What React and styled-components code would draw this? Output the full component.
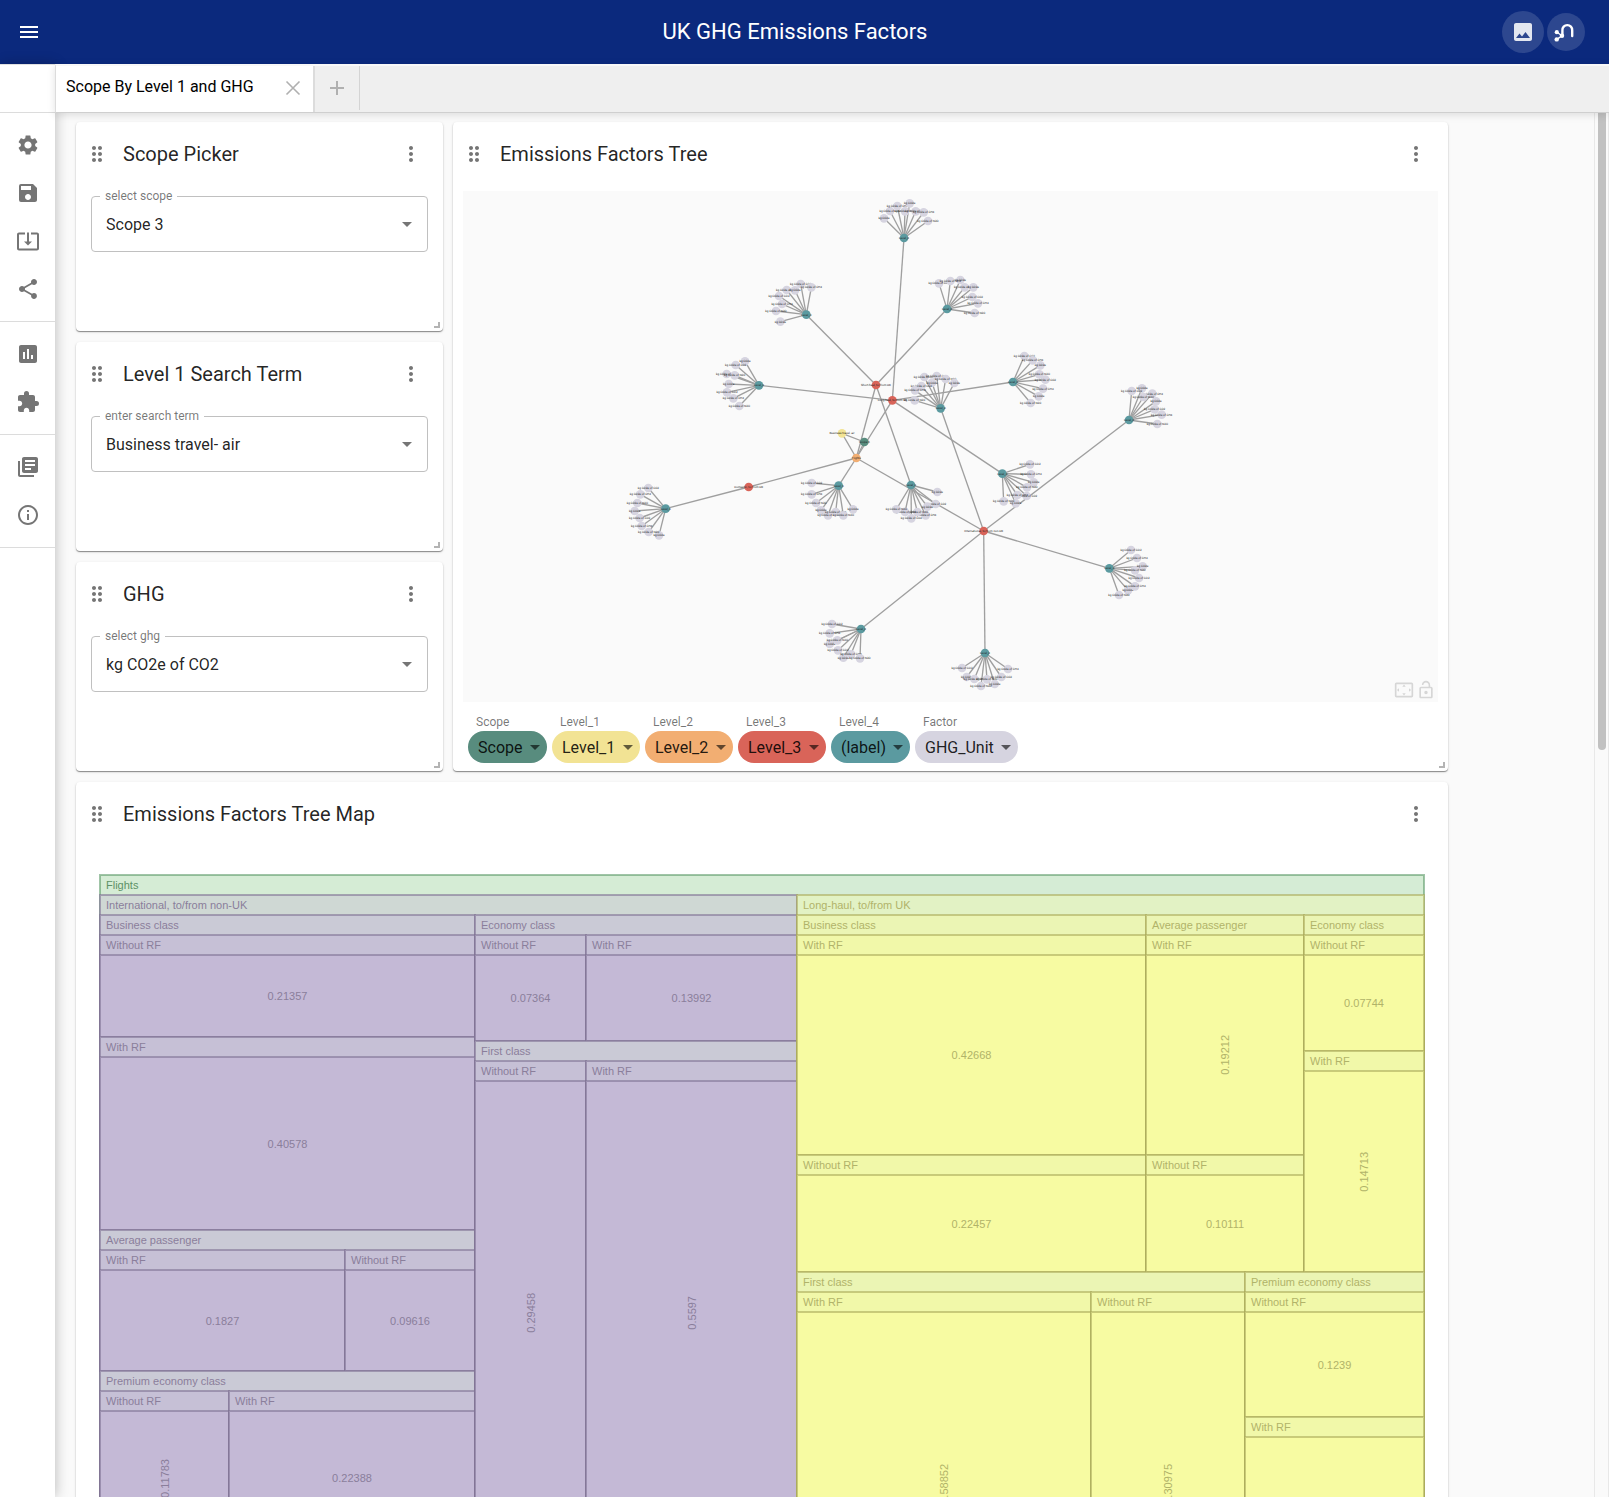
import React, { useId } from "react";
import styled, { createGlobalStyle } from "styled-components";
import {
  MdArrowDropDown,
  MdDragIndicator,
  MdExtension,
  MdImage,
  MdInfoOutline,
  MdInsertChart,
  MdLibraryBooks,
  MdLockOpen,
  MdMenu,
  MdMoreVert,
  MdSave,
  MdSettings,
  MdSettingsOverscan,
  MdShare,
  MdSystemUpdateAlt,
} from "react-icons/md";

const GlobalStyle = createGlobalStyle`
  *, *::before, *::after { box-sizing: border-box; }
  body {
    margin: 0;
    background: #fafafa;
    color: rgba(0, 0, 0, 0.87);
    font-family: Roboto, "Liberation Sans", sans-serif;
    font-size: 16px;
  }
  button, select { font: inherit; color: inherit; }
`;

/* ---------- shell ---------- */

const Shell = styled.div`
  display: flex;
  flex-direction: column;
  height: 100vh;
  overflow: hidden;
`;

const TopBar = styled.header`
  display: flex;
  align-items: center;
  flex: none;
  height: 64px;
  padding-right: 24px;
  background: #0b297d;
  color: #fff;
`;

const MenuSlot = styled.div`
  width: 88px;
  padding-left: 17px;
`;

const IconButton = styled.button`
  display: flex;
  align-items: center;
  justify-content: center;
  flex: none;
  width: ${(p) => p.$size || 24}px;
  height: ${(p) => p.$size || 24}px;
  padding: 0;
  border: 0;
  border-radius: 50%;
  background: ${(p) => p.$fill || "transparent"};
  color: ${(p) => p.$color || "#757575"};
  cursor: pointer;
`;

const AppTitle = styled.h1`
  flex: 1;
  margin: 0;
  text-align: center;
  font-size: 22px;
  font-weight: 400;
  line-height: 32px;
`;

const TopActions = styled.div`
  display: flex;
  align-items: center;
  gap: 3px;
`;

const Body = styled.div`
  display: flex;
  flex: 1;
  min-height: 0;
`;

const Sidebar = styled.nav`
  position: relative;
  z-index: 2;
  flex: none;
  width: 55px;
  background: #fff;
  box-shadow: 1px 0 12px rgba(0, 0, 0, 0.24);
`;

const SidebarTop = styled.div`
  height: 49px;
  border-top: 1px solid #e0e0e0;
  border-bottom: 1px solid #dcdcdc;
`;

const SidebarGroup = styled.div`
  display: flex;
  flex-direction: column;
  align-items: center;
  padding: 8px 0;
  border-bottom: 1px solid #dcdcdc;
`;

const Workspace = styled.div`
  display: flex;
  flex-direction: column;
  flex: 1;
  min-width: 0;
`;

const TabBar = styled.div`
  position: relative;
  z-index: 3;
  display: flex;
  flex: none;
  height: 49px;
  border-top: 2px solid #f8f8f8;
  border-left: 1px solid #dcdcdc;
  border-bottom: 1px solid #cfcfcf;
  background: #efefef;
  box-shadow: 0 2px 8px rgba(0, 0, 0, 0.12);
`;

const Tab = styled.div`
  display: flex;
  align-items: center;
  justify-content: space-between;
  width: 259px;
  padding: 0 10px 2px;
  border-right: 2px solid #dcdcdc;
  background: #fff;
  color: #000;
`;

const TabName = styled.a`
  padding-bottom: 2px;
  color: inherit;
  line-height: 24px;
  text-decoration: none;
`;

const AddTab = styled.div`
  display: flex;
  align-items: center;
  justify-content: center;
  width: 45px;
  height: 44px;
  border-right: 1px solid #d4d4d4;
`;

const Viewport = styled.div`
  display: flex;
  flex: 1;
  min-height: 0;
`;

const Canvas = styled.main`
  flex: 1;
  min-width: 0;
  padding: 9px 146px 9px 21px;
  overflow-y: auto;
  scrollbar-width: none;
`;

const ScrollTrack = styled.div`
  flex: none;
  width: 15px;
  padding: 0 3px;
  border: solid #e8e8e8;
  border-width: 0 1px;
  background: #fafafa;
`;

const ScrollThumb = styled.div`
  width: 8px;
  height: 46%;
  border-radius: 0 0 4px 4px;
  background: #c1c1c1;
`;

/* ---------- cards ---------- */

const Board = styled.div`
  display: grid;
  grid-template-columns: minmax(0, 367fr) minmax(0, 995fr);
  gap: 11px 10px;
`;

const Stack = styled.div`
  display: grid;
  grid-auto-rows: 209px;
  gap: 11px;
`;

const CardBox = styled.section`
  position: relative;
  display: flex;
  flex-direction: column;
  grid-column: ${(p) => (p.$wide ? "1 / -1" : "auto")};
  border-radius: 4px;
  background: #fff;
  box-shadow: 0 1px 1px rgba(0, 0, 0, 0.4), 0 1px 3px rgba(0, 0, 0, 0.12);
`;

const CardHeader = styled.div`
  display: flex;
  align-items: center;
  flex: none;
  height: 64px;
  padding: 0 20px 0 9px;
  color: #757575;
`;

const CardTitle = styled.h2`
  flex: 1;
  margin: 0;
  padding-left: 14px;
  color: rgba(0, 0, 0, 0.87);
  font-size: 20px;
  font-weight: 400;
  line-height: 32px;
`;

const ResizeHandle = styled.span`
  position: absolute;
  right: 3px;
  bottom: 3px;
  width: 6px;
  height: 6px;
  border: solid #b4b4b4;
  border-width: 0 2px 2px 0;
  cursor: se-resize;
`;

function Card({ title, wide, children }) {
  return (
    <CardBox $wide={wide}>
      <CardHeader>
        <MdDragIndicator size={24} />
        <CardTitle>{title}</CardTitle>
        <IconButton aria-label={`${title} options`}>
          <MdMoreVert size={24} />
        </IconButton>
      </CardHeader>
      {children}
      <ResizeHandle />
    </CardBox>
  );
}

/* ---------- outlined select ---------- */

const Field = styled.div`
  position: relative;
  margin: 10px 15px 0;
`;

const FieldLabel = styled.label`
  position: absolute;
  top: -8px;
  left: 9px;
  padding: 0 5px;
  background: #fff;
  color: rgba(0, 0, 0, 0.54);
  font-size: 12px;
  line-height: 16px;
`;

const FieldSelect = styled.select`
  display: block;
  width: 100%;
  height: 56px;
  padding: 0 32px 0 14px;
  border: 1px solid #c0c0c0;
  border-radius: 4px;
  background: transparent;
  appearance: none;
`;

const FieldArrow = styled(MdArrowDropDown)`
  position: absolute;
  top: 16px;
  right: 9px;
  color: #757575;
  pointer-events: none;
`;

function SelectField({ label, value }) {
  const id = useId();
  return (
    <Field>
      <FieldSelect id={id} defaultValue={value}>
        <option>{value}</option>
      </FieldSelect>
      <FieldLabel htmlFor={id}>{label}</FieldLabel>
      <FieldArrow size={24} />
    </Field>
  );
}

/* ---------- graph ---------- */

const GraphPane = styled.div`
  position: relative;
  height: 511px;
  margin: 5px 10px 0;
  background: #fafafa;
`;

const GraphSvg = styled.svg`
  display: block;
  width: 100%;
  height: 100%;
  font-size: 9px;
  text-anchor: middle;
  text-rendering: geometricPrecision;
`;

const GraphTools = styled.div`
  position: absolute;
  right: 2px;
  bottom: 2px;
  display: flex;
  gap: 2px;
`;

const Legend = styled.div`
  display: flex;
  gap: 5px;
  padding: 12px 15px 8px;
`;

const LegendLabel = styled.label`
  display: block;
  padding-left: 8px;
  color: rgba(0, 0, 0, 0.54);
  font-size: 12px;
  line-height: 17px;
`;

const Pill = styled.div`
  position: relative;
  color: rgba(0, 0, 0, 0.6);
`;

const PillSelect = styled.select`
  display: block;
  height: 32px;
  padding: 0 24px 0 10px;
  border: 0;
  border-radius: 16px;
  background: ${(p) => p.$color};
  color: rgba(0, 0, 0, 0.87);
  appearance: none;
`;

const PillArrow = styled(MdArrowDropDown)`
  position: absolute;
  top: 4px;
  right: 0;
  pointer-events: none;
`;

const COLORS = {
  scope: "#588c7e",
  level1: "#f2e394",
  level2: "#f2ae72",
  level3: "#d96459",
  level4: "#5b9aa0",
  factor: "#d6d4e0",
};

const LEGEND = [
  ["Scope", "Scope", COLORS.scope],
  ["Level_1", "Level_1", COLORS.level1],
  ["Level_2", "Level_2", COLORS.level2],
  ["Level_3", "Level_3", COLORS.level3],
  ["Level_4", "(label)", COLORS.level4],
  ["Factor", "GHG_Unit", COLORS.factor],
];

const CORE = {
  scope: { x: 1204, y: 753, color: COLORS.scope, label: "Scope 3" },
  travel: { x: 1137, y: 727, color: COLORS.level1, label: "Business travel- air" },
  flights: { x: 1180, y: 801, color: COLORS.level2, label: "Flights" },
  short: { x: 1239, y: 582, color: COLORS.level3, label: "Short-haul, to/from UK" },
  long: { x: 1288, y: 628, color: COLORS.level3, label: "Long-haul, to/from UK" },
  domestic: { x: 857, y: 888, color: COLORS.level3, label: "Domestic, to/from UK" },
  intl: { x: 1562, y: 1020, color: COLORS.level3, label: "International, to/from non-UK" },
};

const CORE_EDGES = [
  ["scope", "travel"],
  ["travel", "flights"],
  ["scope", "flights"],
  ["flights", "short"],
  ["flights", "long"],
  ["flights", "domestic"],
  ["flights", "intl"],
];

/* Each hub carries its factor nodes as offsets from the hub. */
const HUBS = [
  { x: 1323, y: 141, parent: "long", leaves: [[-60, -59], [-42, -81], [-20, -96], [3, -80], [17, -104], [35, -80], [59, -77], [72, -51]] },
  { x: 1030, y: 371, parent: "short", leaves: [[-78, 21], [-17, -92], [15, -82], [-59, -74], [-34, -73], [-82, -56], [-73, -32], [-91, -11]] },
  { x: 1452, y: 354, parent: "short", leaves: [[40, -87], [-24, -77], [10, -84], [53, -65], [79, -65], [76, -36], [93, -17], [83, 12]] },
  { x: 888, y: 583, parent: "long", leaves: [[-42, -72], [-70, -61], [-97, -34], [-73, -30], [-91, -4], [-96, 21], [-77, 39], [-59, 62]] },
  { x: 1433, y: 652, parent: "intl", leaves: [[-26, -77], [-49, -94], [-12, -97], [15, -88], [41, -76], [-58, -67], [-77, -54], [-78, -24]] },
  { x: 1650, y: 573, parent: "long", leaves: [[82, -50], [34, -78], [59, -65], [79, -23], [77, 43], [97, -7], [90, 20], [53, 63]] },
  { x: 1998, y: 687, parent: "intl", leaves: [[39, -95], [8, -87], [70, -79], [43, -69], [81, -56], [77, -32], [98, -16], [85, 12]] },
  { x: 1618, y: 848, parent: "long", leaves: [[94, 26], [83, -28], [86, 2], [74, 41], [40, 89], [73, 67], [45, 64], [4, 83]] },
  { x: 1344, y: 882, parent: "short", leaves: [[79, 21], [74, 57], [44, 91], [19, 81], [49, 65], [1, 100], [-18, 81], [-44, 73]] },
  { x: 1127, y: 884, parent: "flights", leaves: [[-53, 74], [-81, -8], [-81, 26], [-68, 52], [43, 71], [-32, 89], [-9, 79], [14, 89]] },
  { x: 608, y: 953, parent: "domestic", leaves: [[-93, 7], [-52, -62], [-76, -43], [-85, -17], [-20, 80], [-78, 28], [-72, 52], [-51, 70]] },
  { x: 1939, y: 1132, parent: "intl", leaves: [[100, -6], [65, -55], [83, -31], [77, 6], [56, 66], [89, 29], [77, 54], [29, 80]] },
  { x: 1194, y: 1314, parent: "intl", leaves: [[-94, 45], [-87, -15], [-94, 13], [-71, 34], [-53, 86], [-69, 64], [-30, 76], [-3, 88]] },
  { x: 1566, y: 1386, parent: "intl", leaves: [[-55, 72], [-69, 45], [-32, 78], [6, 79], [29, 93], [49, 72], [69, 48], [-12, 99]] },
];

const UNITS = ["kg CO2e", "kg CO2e of CO2", "kg CO2e of CH4", "kg CO2e of N2O"];

function Node({ x, y, color, label }) {
  return (
    <g>
      <circle cx={x} cy={y} r={13} fill={color} />
      <text x={x} y={y + 3} fill="#222">
        {label}
      </text>
    </g>
  );
}

function Graph() {
  return (
    <GraphSvg viewBox="0 0 2925 1533" role="img" aria-label="Emissions factors graph">
      <g stroke="#9f9f9f" strokeWidth={4}>
        {CORE_EDGES.map(([a, b]) => (
          <line key={a + b} x1={CORE[a].x} y1={CORE[a].y} x2={CORE[b].x} y2={CORE[b].y} />
        ))}
        {HUBS.map((h, i) => (
          <g key={i}>
            <line x1={CORE[h.parent].x} y1={CORE[h.parent].y} x2={h.x} y2={h.y} />
            {h.leaves.map(([dx, dy], j) => (
              <line key={j} x1={h.x} y1={h.y} x2={h.x + dx} y2={h.y + dy} />
            ))}
          </g>
        ))}
      </g>
      {HUBS.map((h, i) => (
        <g key={i}>
          {h.leaves.map(([dx, dy], j) => (
            <Node key={j} x={h.x + dx} y={h.y + dy} color={COLORS.factor} label={UNITS[j % 4]} />
          ))}
          <Node x={h.x} y={h.y} color={COLORS.level4} label="Level_4" />
        </g>
      ))}
      {Object.entries(CORE).map(([key, n]) => (
        <Node key={key} {...n} />
      ))}
    </GraphSvg>
  );
}

function LegendItem({ label, value, color }) {
  const id = useId();
  return (
    <div>
      <LegendLabel htmlFor={id}>{label}</LegendLabel>
      <Pill>
        <PillSelect id={id} $color={color} defaultValue={value}>
          <option>{value}</option>
        </PillSelect>
        <PillArrow size={24} />
      </Pill>
    </div>
  );
}

/* ---------- tree map ---------- */

const TreeMapFrame = styled.div`
  display: flex;
  height: 780px;
  margin: 29px 24px 24px;
  font-family: "Liberation Sans", Arial, sans-serif;
  font-size: 11px;
`;

const THEMES = {
  green: { fills: ["#d5ecd5"], leaf: "#d5ecd5", line: "rgba(96, 157, 108, 0.6)", text: "#5c9166" },
  purple: {
    fills: ["#d5ecd5", "#cfd8d4", "#cacad6", "#c6c0d6"],
    leaf: "#c4b9d6",
    line: "rgba(128, 115, 148, 0.6)",
    text: "#8a7e9b",
  },
  yellow: {
    fills: ["#d5ecd5", "#e2f2c4", "#ebf5b4", "#f1f8a9"],
    leaf: "#f7fba2",
    line: "rgba(172, 172, 92, 0.6)",
    text: "#b1b369",
  },
};

/* Positioned so that a nested tile's outline is painted over its parent's. */
const TileBox = styled.div`
  position: relative;
  display: flex;
  flex-direction: column;
  flex: ${(p) => p.$size} 1 0;
  min-width: 0;
  min-height: 0;
  background: ${(p) => p.$fill};
  color: ${(p) => p.$theme.text};
  outline: 2px solid ${(p) => p.$theme.line};
  outline-offset: -1px;
`;

const TileHeader = styled.div`
  flex: none;
  height: 20px;
  padding-left: 6px;
  overflow: hidden;
  line-height: 20px;
  white-space: nowrap;
`;

const Split = styled.div`
  display: flex;
  flex: ${(p) => p.$size || 1} 1 0;
  flex-direction: ${(p) => (p.$down ? "column" : "row")};
  min-width: 0;
  min-height: 0;
`;

const LeafBox = styled(TileBox)`
  align-items: center;
  justify-content: center;
`;

const LeafValue = styled.span`
  writing-mode: ${(p) => (p.$upright ? "vertical-rl" : "horizontal-tb")};
  transform: ${(p) => (p.$upright ? "rotate(180deg)" : "none")};
`;

function Tile({ label, size, depth, tone, down, children }) {
  const theme = THEMES[tone];
  return (
    <TileBox $size={size} $theme={theme} $fill={theme.fills[depth]}>
      <TileHeader>{label}</TileHeader>
      <Split $down={down}>{children}</Split>
    </TileBox>
  );
}

function Factor({ label, size, tone, value, upright }) {
  const theme = THEMES[tone];
  return (
    <Tile label={label} size={size} depth={3} tone={tone}>
      <LeafBox $size={1} $theme={theme} $fill={theme.leaf}>
        <LeafValue $upright={upright}>{value}</LeafValue>
      </LeafBox>
    </Tile>
  );
}

function TreeMap() {
  return (
    <TreeMapFrame>
      <Tile label="Flights" size={1} depth={0} tone="green">
        <Split $size={697} $down>
          <Tile label="International, to/from non-UK" size={650} depth={1} tone="purple">
            <Split $size={375} $down>
              <Tile label="Business class" size={315} depth={2} tone="purple" down>
                <Factor label="Without RF" size={102} tone="purple" value="0.21357" />
                <Factor label="With RF" size={193} tone="purple" value="0.40578" />
              </Tile>
              <Tile label="Average passenger" size={141} depth={2} tone="purple">
                <Factor label="With RF" size={245} tone="purple" value="0.1827" />
                <Factor label="Without RF" size={130} tone="purple" value="0.09616" />
              </Tile>
              <Tile label="Premium economy class" size={174} depth={2} tone="purple">
                <Factor label="Without RF" size={129} tone="purple" value="0.11783" upright />
                <Factor label="With RF" size={246} tone="purple" value="0.22388" />
              </Tile>
            </Split>
            <Split $size={322} $down>
              <Tile label="Economy class" size={126} depth={2} tone="purple">
                <Factor label="Without RF" size={111} tone="purple" value="0.07364" />
                <Factor label="With RF" size={211} tone="purple" value="0.13992" />
              </Tile>
              <Tile label="First class" size={504} depth={2} tone="purple">
                <Factor label="Without RF" size={111} tone="purple" value="0.29458" upright />
                <Factor label="With RF" size={211} tone="purple" value="0.5597" upright />
              </Tile>
            </Split>
          </Tile>
          <Tile label="Short-haul, to/from UK" size={110} depth={0} tone="green" />
        </Split>
        <Split $size={627}>
          <Tile label="Long-haul, to/from UK" size={1} depth={1} tone="yellow" down>
            <Split $size={357}>
              <Tile label="Business class" size={349} depth={2} tone="yellow" down>
                <Factor label="With RF" size={220} tone="yellow" value="0.42668" />
                <Factor label="Without RF" size={117} tone="yellow" value="0.22457" />
              </Tile>
              <Tile label="Average passenger" size={158} depth={2} tone="yellow" down>
                <Factor label="With RF" size={220} tone="yellow" value="0.19212" upright />
                <Factor label="Without RF" size={117} tone="yellow" value="0.10111" />
              </Tile>
              <Tile label="Economy class" size={120} depth={2} tone="yellow" down>
                <Factor label="Without RF" size={116} tone="yellow" value="0.07744" />
                <Factor label="With RF" size={221} tone="yellow" value="0.14713" upright />
              </Tile>
            </Split>
            <Split $size={383}>
              <Tile label="First class" size={448} depth={2} tone="yellow">
                <Factor label="With RF" size={294} tone="yellow" value="0.58852" upright />
                <Factor label="Without RF" size={154} tone="yellow" value="0.30975" upright />
              </Tile>
              <Tile label="Premium economy class" size={179} depth={2} tone="yellow" down>
                <Factor label="Without RF" size={125} tone="yellow" value="0.1239" />
                <Factor label="With RF" size={238} tone="yellow" value="0.23541" upright />
              </Tile>
            </Split>
          </Tile>
        </Split>
      </Tile>
    </TreeMapFrame>
  );
}

/* ---------- icons drawn here ---------- */

function ThinCross({ turned }) {
  return (
    <svg width="20" height="20" viewBox="0 0 20 20" fill="none" stroke="#b0b0b0" strokeWidth={turned ? 1.6 : 2}>
      <path d={turned ? "M3.5 3.5L16.5 16.5M16.5 3.5L3.5 16.5" : "M10 3V17M3 10H17"} />
    </svg>
  );
}

function GraphLogo() {
  return (
    <svg width="38" height="38" viewBox="-19 -19 38 38" fill="none" stroke="#fff">
      <path d="M-3.6 2.5V-1.6A4.9 4.9 0 0 1 1.3 -6.9A4.9 4.9 0 0 1 6.2 -1.6V4" strokeWidth="2.4" strokeLinecap="round" />
      <path d="M-9 .3L-4 3.8L-9.2 7.4" strokeWidth="1.4" />
      <g fill="#fff" stroke="none">
        <circle cx="-9.2" cy=".2" r="2.1" />
        <circle cx="-9.3" cy="7.4" r="2.2" />
        <circle cx="-4" cy="3.8" r="2.2" />
      </g>
    </svg>
  );
}

const NAV = [
  [
    ["Settings", MdSettings],
    ["Save", MdSave],
    ["Load", MdSystemUpdateAlt],
    ["Share", MdShare],
  ],
  [
    ["Example reports", MdInsertChart],
    ["Extensions", MdExtension],
  ],
  [
    ["Documentation", MdLibraryBooks],
    ["About", MdInfoOutline],
  ],
];

export default function App() {
  return (
    <Shell>
      <GlobalStyle />
      <TopBar>
        <MenuSlot>
          <IconButton aria-label="Menu" $color="#fff">
            <MdMenu size={24} />
          </IconButton>
        </MenuSlot>
        <AppTitle>UK GHG Emissions Factors</AppTitle>
        <TopActions>
          <IconButton aria-label="Save as image" $size={42} $fill="rgba(255,255,255,0.14)" $color="rgba(255,255,255,0.87)">
            <MdImage size={24} />
          </IconButton>
          <IconButton aria-label="Connection" $size={38} $fill="rgba(255,255,255,0.14)">
            <GraphLogo />
          </IconButton>
        </TopActions>
      </TopBar>
      <Body>
        <Sidebar>
          <SidebarTop />
          {NAV.map((group, i) => (
            <SidebarGroup key={i}>
              {group.map(([name, Icon]) => (
                <IconButton key={name} aria-label={name} $size={48}>
                  <Icon size={24} />
                </IconButton>
              ))}
            </SidebarGroup>
          ))}
        </Sidebar>
        <Workspace>
          <TabBar>
            <Tab>
              <TabName href="#page">Scope By Level 1 and GHG</TabName>
              <IconButton aria-label="Close page" $size={20}>
                <ThinCross turned />
              </IconButton>
            </Tab>
            <AddTab>
              <IconButton aria-label="Add page" $size={20}>
                <ThinCross />
              </IconButton>
            </AddTab>
          </TabBar>
          <Viewport>
            <Canvas>
              <Board>
                <Stack>
                  <Card title="Scope Picker">
                    <SelectField label="select scope" value="Scope 3" />
                  </Card>
                  <Card title="Level 1 Search Term">
                    <SelectField label="enter search term" value="Business travel- air" />
                  </Card>
                  <Card title="GHG">
                    <SelectField label="select ghg" value="kg CO2e of CO2" />
                  </Card>
                </Stack>
                <Card title="Emissions Factors Tree">
                  <GraphPane>
                    <Graph />
                    <GraphTools>
                      <IconButton aria-label="Fit to view" $size={20} $color="#d6d6d6">
                        <MdSettingsOverscan size={20} />
                      </IconButton>
                      <IconButton aria-label="Lock layout" $size={20} $color="#d6d6d6">
                        <MdLockOpen size={20} />
                      </IconButton>
                    </GraphTools>
                  </GraphPane>
                  <Legend>
                    {LEGEND.map(([label, value, color]) => (
                      <LegendItem key={label} label={label} value={value} color={color} />
                    ))}
                  </Legend>
                </Card>
                <Card title="Emissions Factors Tree Map" wide>
                  <TreeMap />
                </Card>
              </Board>
            </Canvas>
            <ScrollTrack>
              <ScrollThumb />
            </ScrollTrack>
          </Viewport>
        </Workspace>
      </Body>
    </Shell>
  );
}
